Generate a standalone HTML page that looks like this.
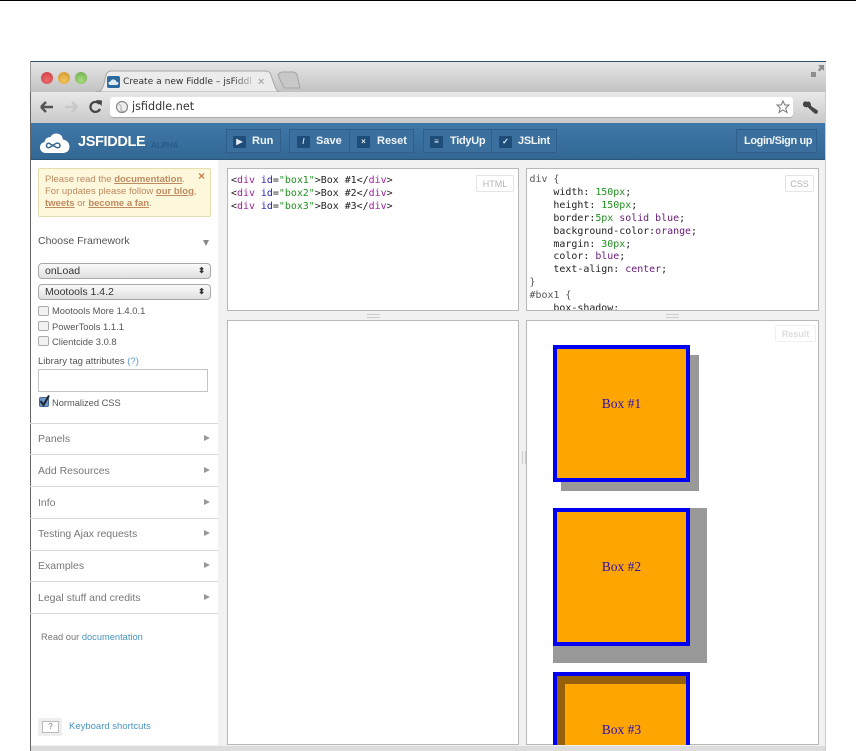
<!DOCTYPE html>
<html><head><meta charset="utf-8"><style>
html,body{margin:0;padding:0;background:#fff;width:856px;height:751px;overflow:hidden;font-family:"Liberation Sans",sans-serif}
#w{position:absolute;left:0;top:0;width:856px;height:751px;overflow:hidden;filter:blur(.35px)}
.a{position:absolute;white-space:nowrap}
.btn{position:absolute;top:129px;height:24px;background:#3b6f9e;border:1px solid #2f5f8a;box-sizing:border-box;color:#f0f5f9;font-weight:bold;font-size:11px;line-height:22px}
.btn span{top:0}
.ic{position:absolute;top:136px;width:13px;height:12px;background:#1f4d7a;border-radius:1px;color:#e8eef4;font-size:8px;line-height:12px;text-align:center;font-weight:bold}
.pane{position:absolute;background:#fff;border:1px solid #b8b8b8;box-sizing:border-box}
.code{position:absolute;font-family:"DejaVu Sans Mono","Liberation Mono",monospace;font-size:9.95px;line-height:13px;white-space:pre;color:#222}
.k{color:#a0209a}.b{color:#2020b0}.g{color:#1f8f1f}.p{color:#6a1a7a}
.lab{position:absolute;border:1px solid #e4e4e4;border-radius:2px;color:#b4b4b4;font-size:9px;text-align:center;height:17px;line-height:16px;box-sizing:border-box}
.s{position:absolute;left:38px;font-size:10.5px;color:#777}
.n{color:#555;font-size:9.4px;line-height:12px}
.l{position:absolute;left:30px;width:188px;height:1px;background:#d8d8d8}
.t{position:absolute;left:204px;width:0;height:0;border-left:6px solid #999;border-top:3.5px solid transparent;border-bottom:3.5px solid transparent}
.sel{position:absolute;left:38px;width:173px;height:16px;border:1px solid #a8a8a8;border-radius:4px;box-sizing:border-box;background:linear-gradient(#fafafa,#e0e0e0);font-size:10.5px;color:#333;line-height:14px;padding-left:6px}
.sel i{position:absolute;right:5px;top:0;font-style:normal;font-size:8px;color:#333;font-weight:bold;line-height:14px}
.cb{position:absolute;left:38px;width:11px;height:10px;border:1px solid #aaa;border-radius:2px;box-sizing:border-box;background:#f2f2f2}
.box{position:absolute;left:553px;width:137px;box-sizing:border-box;background:#ffa500;border:4px solid #0000f0;color:#2a10b0;font-family:"Liberation Serif",serif;font-size:13.5px;text-align:center}
.dot{position:absolute;top:72px;width:12px;height:12px;border-radius:50%}
</style></head><body><div id="w">
<div class="a" style="left:0;top:0;width:856px;height:1px;background:#000"></div>

<!-- window -->
<div class="a" style="left:30px;top:61px;width:796px;height:690px;background:#f1f1f1;border-left:1px solid #666;border-right:1px solid #ccc;box-sizing:border-box"></div>
<div class="a" style="left:30px;top:61px;width:796px;height:31px;background:linear-gradient(#e6e6e6,#c2c2c2);border-top:1px solid #2e5272;border-left:1px solid #999;box-sizing:border-box"></div>
<div class="dot" style="left:41px;background:radial-gradient(circle at 50% 70%,#ef6a6c,#c93d42)"></div>
<div class="dot" style="left:58px;background:radial-gradient(circle at 50% 70%,#f2c45a,#d0952a)"></div>
<div class="dot" style="left:75px;background:radial-gradient(circle at 50% 70%,#a6dc7e,#6aa84a)"></div>
<svg class="a" style="left:95px;top:69px" width="210" height="24"><path d="M0 23 C6 23 7 21 9 15 L11 6 Q12 2 17 2 L170 2 Q175 2 176 6 L179 15 C181 21 182 23 186 23 Z" fill="#ececec" stroke="#a8a8a8"/><path d="M183 6 Q184 3 188 3 L198 3 Q201 3 202 6 L205 19 L189 19 Z" fill="#c8c8c8" stroke="#a5a5a5"/></svg>
<div class="a" style="left:107px;top:76px;width:13px;height:12px;background:#2f6a9e;border-radius:2px"></div>
<svg class="a" style="left:108px;top:78px" width="11" height="8"><path d="M2 7Q0 6.5 .5 4.5 1 3.5 2.5 3.5 3.5 1 6 1.5 8 2 8.2 3.5 10.5 4 10.5 5.5 10 7 8.5 7Z" fill="#dfe9f2"/></svg>
<div class="a" style="left:123px;top:75px;font-family:'DejaVu Sans',sans-serif;font-size:9.1px;line-height:14px;color:#333;width:129px;overflow:hidden;-webkit-mask-image:linear-gradient(90deg,#000 85%,rgba(0,0,0,.25))">Create a new Fiddle – jsFiddl</div>
<div class="a" style="left:258px;top:75px;font-size:11px;line-height:14px;color:#aaa;font-weight:bold">×</div>
<svg class="a" style="left:809px;top:63px" width="16" height="16"><path d="M9 2H15V8L13 6 10.5 8.5 9 7 11 4Z M2 9 H7 V14 H2Z" fill="#8d8d8d"/></svg>

<div class="a" style="left:31px;top:92px;width:794px;height:31px;background:linear-gradient(#e8e8e8,#c9c9c9)"></div>
<svg class="a" style="left:38px;top:97px" width="70" height="20"><path d="M3 10H15M3 10L8 5M3 10L8 15" stroke="#555" stroke-width="2.4" fill="none"/><path d="M27 10H39M39 10L34 5M39 10L34 15" stroke="#c8c8c8" stroke-width="2.4" fill="none"/><path d="M61.5 7A5 5 0 1 0 62 12" stroke="#444" stroke-width="2.2" fill="none"/><path d="M58 3L64 3.5 63.5 9Z" fill="#444"/></svg>
<div class="a" style="left:110px;top:97px;width:683px;height:20px;background:#fff;border-radius:3px;box-shadow:0 1px 0 #aaa"></div>
<svg class="a" style="left:115px;top:100px" width="14" height="14"><circle cx="7" cy="7" r="5.5" fill="#eee" stroke="#888" stroke-width="1.2"/><path d="M4 4Q7 6 6 9T9 11" stroke="#aaa" fill="none"/></svg>
<div class="a" style="left:132px;top:99px;font-family:'DejaVu Sans',sans-serif;font-size:11.2px;line-height:15px;color:#333">jsfiddle.net</div>
<svg class="a" style="left:776px;top:100px" width="14" height="14"><path d="M7 1L8.8 5H13L9.7 8 11 12.5 7 10 3 12.5 4.3 8 1 5H5.2Z" fill="#fff" stroke="#777"/></svg>
<svg class="a" style="left:802px;top:100px" width="17" height="15"><path d="M2 3.5L5 5 6 2.5C3.5 .5 1.5 1.5 1 3.5 .5 6 3 8 5.5 7L12 13Q14 14.5 15.5 13 16.5 11 15 10L9 6C9 3 8 1.5 6 1.5" fill="#444"/></svg>

<!-- blue bar -->
<div class="a" style="left:31px;top:123px;width:794px;height:37px;background:linear-gradient(#3f77a8,#336894);border-bottom:1px solid #2a5579;box-sizing:border-box"></div>
<svg class="a" style="left:39px;top:131px" width="32" height="23"><path d="M6 22Q1 21 1 16.5 1 12 5.5 11 6.5 6 11.5 6 13.5 2 18 2.5 23 3 24 8.5 30 9.5 30.5 15.5 30.5 21 25 22Z" fill="#fff"/><path d="M12 13.5C10 11.5 7.5 12 7.5 14.5S10 17.5 12 15.5L16 13C18 11.5 21 12 21 14.5S18 17.5 16 15.5Z" fill="none" stroke="#33658f" stroke-width="1.4"/></svg>
<div class="a" style="left:78px;top:134px;font-size:14.5px;line-height:17px;font-weight:bold;color:#fff;letter-spacing:-.35px">JSFIDDLE</div>
<div class="a" style="left:151px;top:141px;font-size:8px;line-height:10px;color:#295a85;font-weight:bold">ALPHA</div>

<div class="btn" style="left:226px;width:55px"><span class="a" style="left:25px">Run</span></div>
<div class="ic" style="left:233px">▶</div>
<div class="btn" style="left:289px;width:61px"><span class="a" style="left:26px">Save</span></div>
<div class="ic" style="left:297px">/</div>
<div class="btn" style="left:349px;width:65px"><span class="a" style="left:27px">Reset</span></div>
<div class="ic" style="left:357px">×</div>
<div class="btn" style="left:423px;width:69px"><span class="a" style="left:26px;letter-spacing:-.3px">TidyUp</span></div>
<div class="ic" style="left:430px">≡</div>
<div class="btn" style="left:491px;width:66px"><span class="a" style="left:26px;letter-spacing:-.3px">JSLint</span></div>
<div class="ic" style="left:499px">✓</div>
<div class="btn" style="left:736px;width:81px"><span class="a" style="left:7px;letter-spacing:-.4px">Login/Sign up</span></div>

<!-- sidebar -->
<div class="a" style="left:31px;top:160px;width:187px;height:585px;background:#fff"></div>
<div class="a" style="left:38px;top:168px;width:173px;height:49px;background:#fdf7dc;border:1px solid #e6dcb0;box-sizing:border-box;border-radius:2px"></div>
<div class="a" style="left:45px;top:174px;font-size:9.5px;line-height:12.2px;color:#bf8a60">Please read the <b style="text-decoration:underline">documentation</b>.<br>For updates please follow <b style="text-decoration:underline">our blog</b>,<br><b style="text-decoration:underline">tweets</b> or <b style="text-decoration:underline">become a fan</b>.</div>
<div class="a" style="left:198px;top:170px;font-size:12px;line-height:13px;font-weight:bold;color:#c9804a">×</div>
<div class="s" style="top:235px;line-height:13px;color:#555">Choose Framework</div>
<div class="a" style="left:203px;top:240px;width:0;height:0;border-top:6px solid #888;border-left:3.5px solid transparent;border-right:3.5px solid transparent"></div>
<div class="sel" style="top:263px">onLoad<i>⬍</i></div>
<div class="sel" style="top:284px">Mootools 1.4.2<i>⬍</i></div>
<div class="cb" style="top:306px"></div><div class="s n" style="left:52px;top:305px">Mootools More 1.4.0.1</div>
<div class="cb" style="top:321px"></div><div class="s n" style="left:52px;top:321px">PowerTools 1.1.1</div>
<div class="cb" style="top:336px"></div><div class="s n" style="left:52px;top:336px">Clientcide 3.0.8</div>
<div class="s" style="top:356px;font-size:9.5px;line-height:12px;color:#555">Library tag attributes <span style="color:#5a9bc8">(?)</span></div>
<div class="a" style="left:38px;top:369px;width:170px;height:23px;border:1px solid #c4c4c4;box-sizing:border-box"></div>
<div class="a" style="left:39px;top:397px;width:10px;height:10px;background:#6f9ac8;border:1px solid #4a6a90;box-sizing:border-box;border-radius:2px"></div>
<svg class="a" style="left:38px;top:394px" width="13" height="13"><path d="M2.5 7L5.5 11 11 1.5" stroke="#1a2430" stroke-width="2" fill="none"/></svg>
<div class="s" style="left:52px;top:397px;font-size:9.3px;line-height:12px;color:#555">Normalized CSS</div>
<div class="l" style="top:423px"></div>
<div class="s" style="top:433px;line-height:13px">Panels</div><div class="t" style="top:435px"></div>
<div class="l" style="top:454px"></div>
<div class="s" style="top:465px;line-height:13px">Add Resources</div><div class="t" style="top:467px"></div>
<div class="l" style="top:486px"></div>
<div class="s" style="top:497px;line-height:13px">Info</div><div class="t" style="top:499px"></div>
<div class="l" style="top:518px"></div>
<div class="s" style="top:528px;line-height:13px">Testing Ajax requests</div><div class="t" style="top:530px"></div>
<div class="l" style="top:550px"></div>
<div class="s" style="top:560px;line-height:13px">Examples</div><div class="t" style="top:562px"></div>
<div class="l" style="top:581px"></div>
<div class="s" style="top:592px;line-height:13px">Legal stuff and credits</div><div class="t" style="top:594px"></div>
<div class="l" style="top:613px"></div>
<div class="s" style="left:41px;top:631px;font-size:9.3px;line-height:12px">Read our <span style="color:#4a94c0">documentation</span></div>
<div class="a" style="left:38px;top:718px;width:24px;height:18px;background:#eee;border-radius:2px"></div>
<div class="a" style="left:42px;top:721px;width:17px;height:12px;background:#fff;border:1px solid #bbb;box-sizing:border-box;font-size:8px;line-height:10px;text-align:center;color:#777">?</div>
<div class="a" style="left:69px;top:721px;font-size:9.5px;line-height:12px;color:#4a94c0">Keyboard shortcuts</div>

<!-- panes -->
<div class="pane" style="left:227px;top:168px;width:292px;height:143px"></div>
<div class="pane" style="left:526px;top:168px;width:293px;height:143px;overflow:hidden"></div>
<div class="pane" style="left:227px;top:320px;width:292px;height:425px"></div>
<div class="pane" style="left:526px;top:320px;width:293px;height:425px"></div>
<div class="a" style="left:367px;top:314px;width:13px;height:2px;border-top:1px solid #ccc;border-bottom:1px solid #ccc"></div>
<div class="a" style="left:666px;top:314px;width:13px;height:2px;border-top:1px solid #ccc;border-bottom:1px solid #ccc"></div>
<div class="a" style="left:522px;top:451px;width:2px;height:13px;border-left:1px solid #ccc;border-right:1px solid #ccc"></div>

<div class="code" style="left:231px;top:174px;line-height:13px">&lt;<span class="k">div</span> <span class="b">id</span>=<span class="g">"box1"</span>&gt;Box #1&lt;/<span class="k">div</span>&gt;
&lt;<span class="k">div</span> <span class="b">id</span>=<span class="g">"box2"</span>&gt;Box #2&lt;/<span class="k">div</span>&gt;
&lt;<span class="k">div</span> <span class="b">id</span>=<span class="g">"box3"</span>&gt;Box #3&lt;/<span class="k">div</span>&gt;</div>
<div class="lab" style="left:476px;top:175px;width:38px">HTML</div>

<div class="a" style="left:527px;top:169px;width:291px;height:141px;overflow:hidden"><div class="code" style="left:2.5px;top:5px;line-height:12.9px"><span style="color:#555">div {</span>
    width: <span class="g">150px</span>;
    height: <span class="g">150px</span>;
    border:<span class="g">5px</span> <span class="p">solid blue</span>;
    background-color:<span class="p">orange</span>;
    margin: <span class="g">30px</span>;
    color: <span class="p">blue</span>;
    text-align: <span class="p">center</span>;
<span style="color:#555">}
#box1 {</span>
    box-shadow:</div></div>
<div class="lab" style="left:785px;top:175px;width:29px">CSS</div>
<div class="lab" style="left:775px;top:325px;width:41px;color:#ddd;border-color:#f0f0f0;font-weight:bold">Result</div>

<!-- boxes -->
<div class="a" style="left:561px;top:355px;width:138px;height:136px;background:#999"></div>
<div class="box" style="top:345px;height:137px;line-height:109px">Box #1</div>
<div class="a" style="left:553px;top:508px;width:154px;height:155px;background:#999"></div>
<div class="box" style="top:508px;height:138px;line-height:110px">Box #2</div>
<div class="box" style="top:672px;height:73px;border-bottom:0;line-height:108px;box-shadow:inset 8px 8px 0 #965f0a;overflow:hidden">Box #3</div>
<div class="a" style="left:31px;top:746px;width:794px;height:5px;background:#dcdcdc"></div>
</div></body></html>
